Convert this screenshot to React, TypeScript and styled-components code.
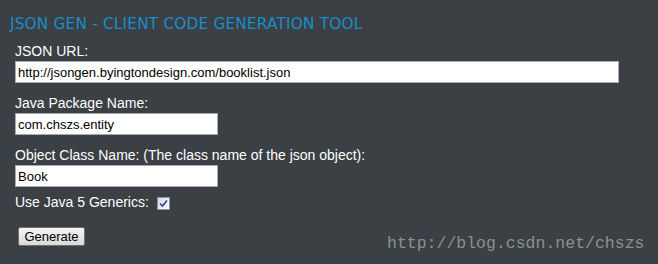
import React, { useState } from 'react'
import styled, { createGlobalStyle } from 'styled-components'

const GlobalStyle = createGlobalStyle`
  html, body {
    margin: 0;
    padding: 0;
    background: #3a4044;
  }
  body {
    width: 658px;
    height: 264px;
    overflow: hidden;
  }
`

const Page = styled.div`
  position: relative;
  width: 658px;
  height: 264px;
  background: #3a4044;
  padding: 15px 0 0 10px;
  box-sizing: border-box;
`

const Title = styled.h1`
  margin: 0;
  font-family: 'DejaVu Sans', Verdana, sans-serif;
  font-size: 15.3px;
  font-weight: normal;
  line-height: 18px;
  color: #1a8cca;
  letter-spacing: 0.2px;
`

const Form = styled.form`
  display: flex;
  flex-direction: column;
  padding-left: 5px;
  margin-top: 10px;
`

const Field = styled.div<{ $mb: number }>`
  display: flex;
  flex-direction: column;
  margin-bottom: ${p => p.$mb}px;
`

const Label = styled.label`
  font-family: 'Liberation Sans', Arial, sans-serif;
  font-size: 14px;
  line-height: 16px;
  color: #ffffff;
  margin-bottom: 2px;
`

const TextInput = styled.input<{ $w: number }>`
  box-sizing: border-box;
  width: ${p => p.$w}px;
  height: 22px;
  margin: 0;
  padding: 1px 2px;
  border: 1px solid #a6a9b0;
  background: #ffffff;
  color: #000;
  font-family: 'Liberation Sans', Arial, sans-serif;
  font-size: 13px;
  outline: none;
`

const CheckRow = styled.div`
  display: flex;
  align-items: flex-start;
  height: 16px;
`

const CheckLabel = styled.span`
  font-family: 'Liberation Sans', Arial, sans-serif;
  font-size: 14px;
  line-height: 16px;
  color: #ffffff;
`

const Check = styled.span`
  box-sizing: border-box;
  width: 13px;
  height: 13px;
  margin: 3px 0 0 8px;
  border: 1px solid #8e8f9f;
  background: linear-gradient(135deg, #d6d8e2, #ffffff);
  display: flex;
  align-items: center;
  justify-content: center;
`

const Button = styled.button`
  margin: 17px 0 0 3px;
  align-self: flex-start;
  box-sizing: border-box;
  width: 67px;
  height: 19px;
  padding: 0;
  border: 1px solid #707070;
  border-radius: 2px;
  background: linear-gradient(#f4f4f4, #dadada);
  font-family: 'Liberation Sans', Arial, sans-serif;
  font-size: 13px;
  line-height: 17px;
  color: #000;
`

const Watermark = styled.div`
  position: absolute;
  left: 387px;
  top: 234px;
  font-family: 'Liberation Mono', 'Courier New', monospace;
  font-size: 16.5px;
  color: #8b9093;
  white-space: nowrap;
`

export default function App() {
  const [url, setUrl] = useState('http://jsongen.byingtondesign.com/booklist.json')
  const [pkg, setPkg] = useState('com.chszs.entity')
  const [cls, setCls] = useState('Book')

  return (
    <>
      <GlobalStyle />
      <Page>
        <Title>JSON GEN - CLIENT CODE GENERATION TOOL</Title>
        <Form onSubmit={e => e.preventDefault()}>
          <Field $mb={12}>
            <Label>JSON URL:</Label>
            <TextInput $w={604} value={url} onChange={e => setUrl(e.target.value)} />
          </Field>
          <Field $mb={12}>
            <Label>Java Package Name:</Label>
            <TextInput $w={203} value={pkg} onChange={e => setPkg(e.target.value)} />
          </Field>
          <Field $mb={7}>
            <Label>Object Class Name: (The class name of the json object):</Label>
            <TextInput $w={203} value={cls} onChange={e => setCls(e.target.value)} />
          </Field>
          <CheckRow>
            <CheckLabel>Use Java 5 Generics:</CheckLabel>
            <Check>
              <svg width="9" height="9" viewBox="0 0 9 9">
                <path d="M1 4.5 L3.5 7 L8 1.5" stroke="#2b3f8c" strokeWidth="1.6" fill="none" />
              </svg>
            </Check>
          </CheckRow>
          <Button type="submit">Generate</Button>
        </Form>
        <Watermark>http://blog.csdn.net/chszs</Watermark>
      </Page>
    </>
  )
}
